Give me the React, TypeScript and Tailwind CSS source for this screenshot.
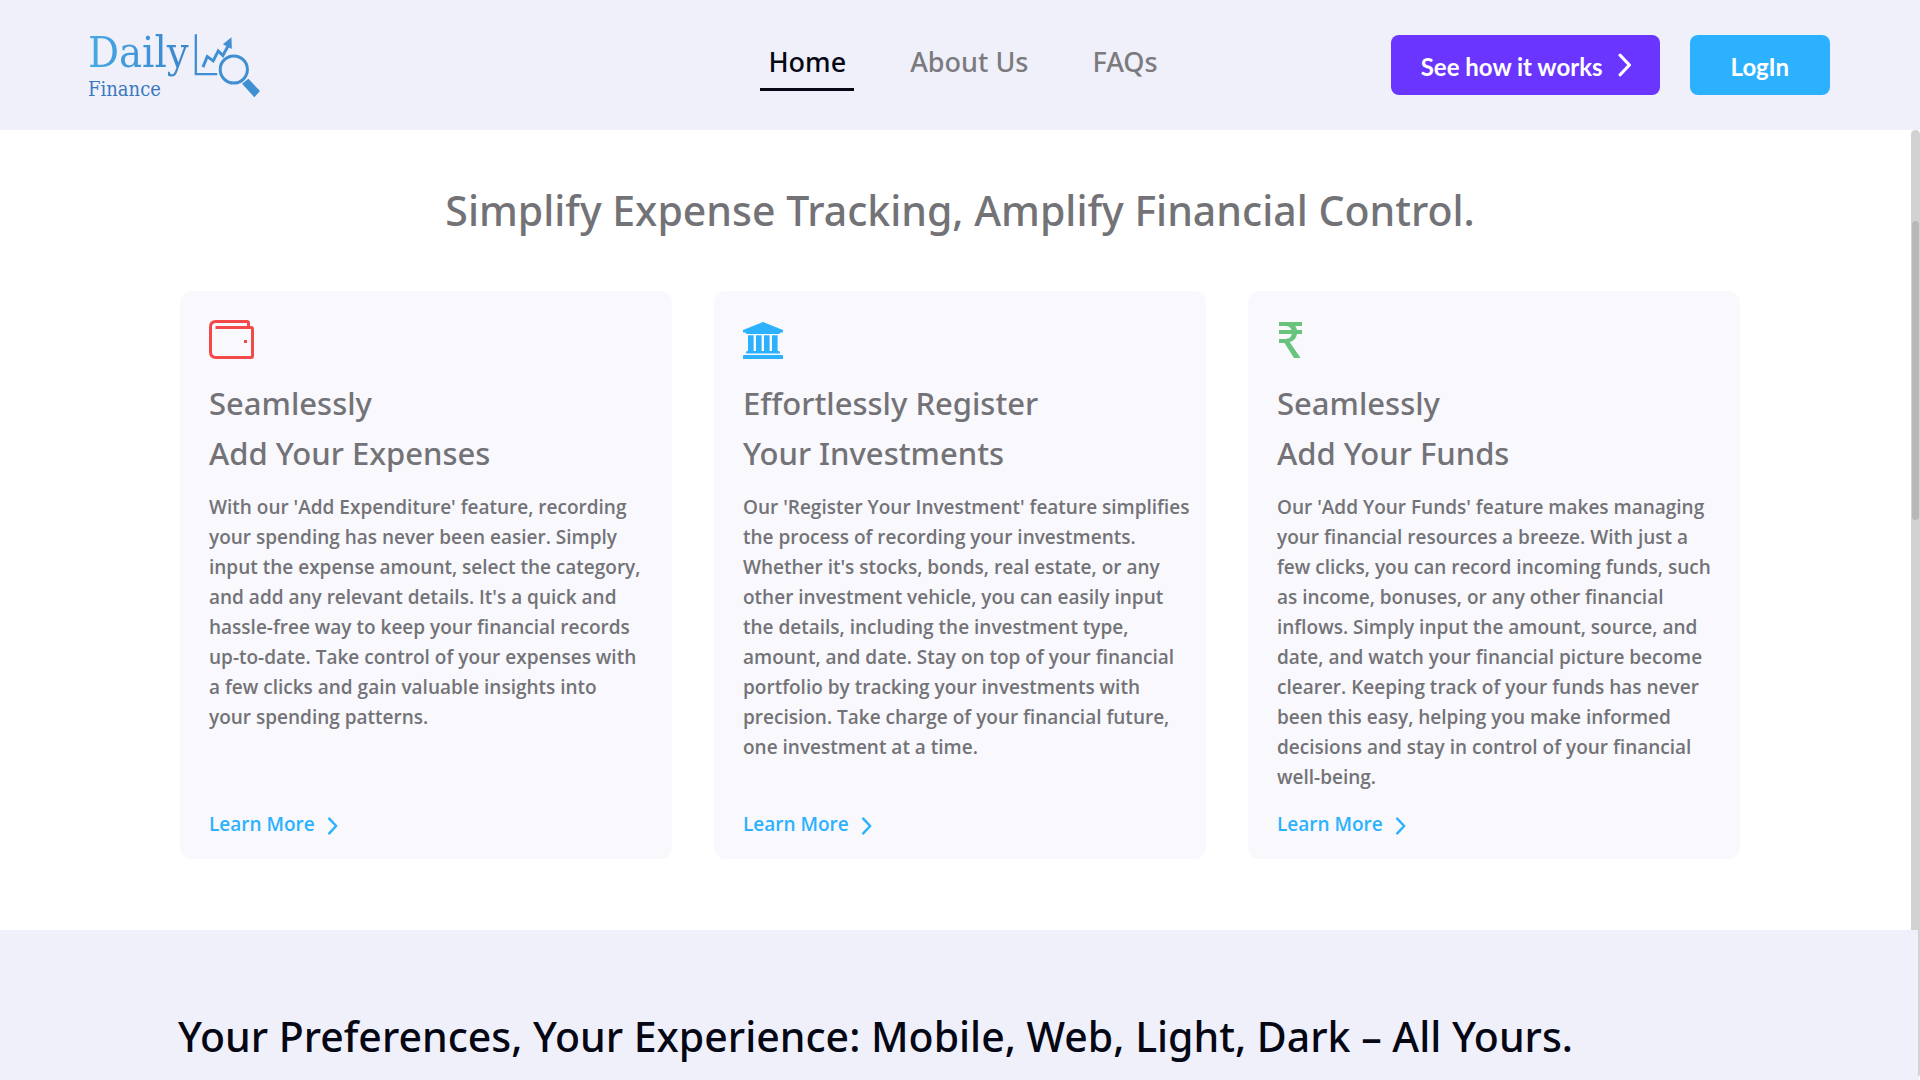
import type { ReactNode } from 'react';

function LogoMark() {
  return (
    <svg viewBox="370 38 205 196" className="h-[65px] w-[68px]" fill="none" stroke="#3f8fd2" aria-hidden="true">
      <path d="M378.500 42V162H443" strokeWidth="7" />
      <path d="M400 141L413 109L431 122L446 92L460 106L477 75" strokeWidth="9" />
      <path d="M486 51L487 86L460 72Z" fill="#3f8fd2" stroke="none" />
      <circle cx="493" cy="148" r="41" strokeWidth="9" />
      <path d="M518 191L537 176L572 213L555 232Z" fill="#3f8fd2" stroke="none" />
    </svg>
  );
}

function WalletIcon() {
  return (
    <svg viewBox="0 0 45 39" className="h-[39px] w-[45px]" fill="none" stroke="#f2494b" strokeWidth="3" aria-hidden="true">
      <path d="M6.500 7.500H42Q43.500 7.500 43.500 9V36Q43.500 37.500 42 37.500H7Q1.500 37.500 1.500 32V7Q1.500 1.500 7 1.500H38Q39.500 1.500 39.500 3V7" />
      <rect x="35" y="20" width="3" height="3" fill="#f2494b" stroke="none" />
    </svg>
  );
}

function BankIcon() {
  return (
    <svg viewBox="0 0 40 37" className="h-[37px] w-10" fill="#2cb1ff" aria-hidden="true">
      <path d="M20 0L40 8V10.600H37.500Q37 12 36 12H4Q3 12 2.500 10.600H0V8Z" />
      <path d="M5 13.200H10.600V29H13V13.200H18.600V29H21V13.200H26.600V29H29V13.200H34.600V29H36Q37 29.200 37 31.600H3Q3 29.200 4 29H5Z" />
      <path d="M1 33H39Q40 33 40 34V37H0V34Q0 33 1 33Z" />
    </svg>
  );
}

function RupeeIcon() {
  return (
    <svg viewBox="0 0 23 37" className="ml-[2px] h-[37px] w-[23px]" fill="#68c37d" aria-hidden="true">
      <path d="M0 0H23V4H16.200Q17.600 5.700 18 8H23V12H18Q16.800 18.600 10.600 20L21.600 36H15L5.500 21H0V17H6.500Q12 16.800 12.800 12H0V8H12.600Q11.200 4 6.500 4H0Z" />
    </svg>
  );
}

function Chevron({ className, width }: { className: string; width: number }) {
  return (
    <svg viewBox="0 0 12 22" className={className} fill="none" stroke="currentColor" strokeWidth={width} strokeLinecap="round" strokeLinejoin="round" aria-hidden="true">
      <path d="M2 2L10.500 11L2 20" />
    </svg>
  );
}

const features: { title: string; icon: ReactNode; body: string }[] = [
  {
    title: 'Seamlessly\nAdd Your Expenses',
    icon: <WalletIcon />,
    body: `With our 'Add Expenditure' feature, recording
your spending has never been easier. Simply
input the expense amount, select the category,
and add any relevant details. It's a quick and
hassle-free way to keep your financial records
up-to-date. Take control of your expenses with
a few clicks and gain valuable insights into
your spending patterns.`,
  },
  {
    title: 'Effortlessly Register\nYour Investments',
    icon: <BankIcon />,
    body: `Our 'Register Your Investment' feature simplifies
the process of recording your investments.
Whether it's stocks, bonds, real estate, or any
other investment vehicle, you can easily input
the details, including the investment type,
amount, and date. Stay on top of your financial
portfolio by tracking your investments with
precision. Take charge of your financial future,
one investment at a time.`,
  },
  {
    title: 'Seamlessly\nAdd Your Funds',
    icon: <RupeeIcon />,
    body: `Our 'Add Your Funds' feature makes managing
your financial resources a breeze. With just a
few clicks, you can record incoming funds, such
as income, bonuses, or any other financial
inflows. Simply input the amount, source, and
date, and watch your financial picture become
clearer. Keeping track of your funds has never
been this easy, helping you make informed
decisions and stay in control of your financial
well-being.`,
  },
];

const links = ['Home', 'About Us', 'FAQs'];

export default function App() {
  return (
    <div className="relative flex h-screen flex-col overflow-hidden bg-white font-['Noto_Sans',sans-serif] text-[#737377]">
      <header className="grid h-[130px] shrink-0 grid-cols-[1fr_auto_1fr] items-start bg-[#f0f0fa] pr-[90px] pl-[88px]">
        <a href="#home" className="flex pt-[33px] font-['DejaVu_Serif_Condensed','DejaVu_Serif',serif]">
          <span className="-mt-2 flex w-[105px] flex-col">
            <span className="bg-linear-to-r from-[#46a9e4] to-[#3a83cb] bg-clip-text text-[43px] leading-[54px] text-transparent">Daily</span>
            <span className="-mt-1 text-[20px] leading-[28px] text-[#3a78be]">Finance</span>
          </span>
          <LogoMark />
        </a>
        <nav className="flex gap-12 pt-9 pl-2 text-[27px] leading-[52px] font-medium">
          {links.map((link) => (
            <a
              key={link}
              href="#top"
              className={link === 'Home' ? 'border-b-3 border-[#050714] px-2 text-[#050714]' : 'px-2 text-[#7b7b7f]'}
            >
              {link}
            </a>
          ))}
        </nav>
        <div className="flex justify-end gap-[30px] pt-[35px] font-['Lato',sans-serif] text-[24px] font-bold text-white">
          <button type="button" className="flex h-[60px] items-center gap-[15px] rounded-lg bg-[#6a35ff] pr-[29px] pl-[30px]">
            <span className="pt-1">See how it works</span>
            <Chevron className="h-6 w-[13px]" width={3} />
          </button>
          <button type="button" className="h-[60px] rounded-lg bg-[#2cb1ff] px-[41px] pt-1">LogIn</button>
        </div>
      </header>

      <main className="shrink-0">
        <section className="px-[180px] pt-[50px] pb-[71px]">
          <h1 className="text-center text-[41px] leading-[60px] font-medium">
            Simplify Expense Tracking, Amplify Financial Control.
          </h1>
          <div className="mt-[51px] grid grid-cols-3 gap-[42px]">
            {features.map((feature) => (
              <article key={feature.body} className="flex flex-col rounded-xl bg-[#f8f8fd] pt-[29px] pb-5 pl-[29px]">
                <div className="flex h-[39px] items-end">{feature.icon}</div>
                <h2 className="mt-[19px] text-[31px] leading-[50px] font-medium whitespace-pre-line">{feature.title}</h2>
                <p className="mt-[14px] grow font-['Open_Sans',sans-serif] text-[19px] leading-[30px] font-semibold whitespace-pre-line">{feature.body}</p>
                <a href="#learn" className="mt-[17px] flex items-center gap-3 font-['Open_Sans',sans-serif] text-[19px] leading-[30px] font-semibold text-[#2cb1ff]">
                  Learn More
                  <Chevron className="mt-1 h-[18px] w-[11px]" width={3} />
                </a>
              </article>
            ))}
          </div>
        </section>
      </main>

      <section className="relative z-10 mr-[2px] h-[400px] shrink-0 bg-[#f0f0fa] px-[178px] pt-[76px]">
        <h2 className="text-[41px] leading-[60px] font-medium whitespace-nowrap text-[#050714]">
          Your Preferences, Your Experience: Mobile, Web, Light, Dark – All Yours.
        </h2>
      </section>

      <div className="absolute top-[130px] right-0 bottom-[2px] w-[9px] rounded-full bg-[#d2d2d2] px-px pt-[91px]">
        <div className="h-[299px] rounded-full bg-[#b9b7b8]" />
      </div>
    </div>
  );
}
